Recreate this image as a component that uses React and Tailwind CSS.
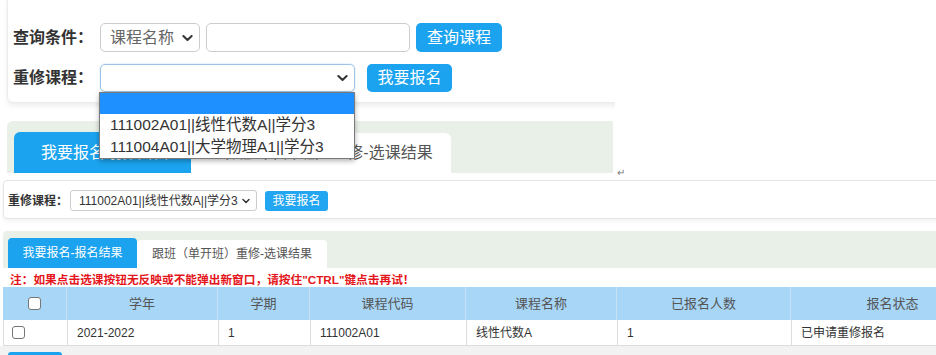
import React from 'react';

function Chevron({ className }) {
  return (
    <svg viewBox="0 0 12 8" className={className} fill="none" stroke="currentColor" strokeWidth="2.2" strokeLinecap="round" strokeLinejoin="round">
      <path d="M1.5 1.8 6 6.2l4.5-4.4" />
    </svg>
  );
}

function Check({ className }) {
  return <span className={`block bg-white border border-[#767676] rounded-[3px] ${className}`} />;
}

const cols = [
  { title: '学年', value: '2021-2022' },
  { title: '学期', value: '1' },
  { title: '课程代码', value: '111002A01' },
  { title: '课程名称', value: '线性代数A' },
  { title: '已报名人数', value: '1' },
  { title: '报名状态', value: '已申请重修报名' }
];

export default function App() {
  return (
    <div className="w-[936px] h-[355px] overflow-hidden bg-white text-[#333] font-[family-name:Liberation_Sans,Noto_Sans_CJK_SC,sans-serif]">
      {/* enlarged snapshot with the open dropdown */}
      <div className="flex h-[178px]">
        <div className="relative w-[615px] h-[173px] overflow-hidden">
          <div className="ml-[7px] -mt-[6px] w-[700px] border border-[#ececec] rounded-[6px] bg-white shadow-[0_3px_5px_rgba(0,0,0,0.07)] pl-[5px] pt-[28px] pb-[10px]">
            <div className="flex items-center h-[29px]">
              <span className="w-[87px] text-[16px] font-bold leading-none">查询条件：</span>
              <div className="w-[100px] h-[29px] border border-[#ccc] rounded-[5px] flex items-center justify-between pl-[9px] pr-[6px] text-[16px] text-[#666]">
                <span>课程名称</span>
                <Chevron className="w-[11px] h-[8px] text-[#333]" />
              </div>
              <div className="ml-[6px] w-[204px] h-[29px] border border-[#ccc] rounded-[5px]" />
              <div className="ml-[6px] w-[86px] h-[29px] rounded-[5px] bg-[#1ba3ef] text-white text-[16px] flex items-center justify-center">查询课程</div>
            </div>
            <div className="flex items-center h-[28px] mt-[12px]">
              <span className="w-[87px] text-[16px] font-bold leading-none">重修课程：</span>
              <div className="w-[255px] h-[28px] border border-[#9ec3e6] rounded-[5px] flex items-center justify-end pr-[6px] shadow-[0_0_2px_rgba(100,160,220,0.4)]">
                <Chevron className="w-[11px] h-[8px] text-[#333]" />
              </div>
              <div className="ml-[12px] w-[85px] h-[28px] rounded-[5px] bg-[#1ba3ef] text-white text-[16px] flex items-center justify-center">我要报名</div>
            </div>
          </div>
          <div className="ml-[7px] mt-[18px] w-[606px] h-[52px] bg-[#e8f0e7] rounded-tl-[6px] flex items-end pl-[7px]">
            <div className="w-[177px] h-[41px] rounded-t-[6px] bg-[#1ba3ef] text-white text-[16px] flex items-center pl-[27px]">我要报名-报名结果</div>
            <div className="w-[260px] h-[40px] rounded-t-[6px] bg-white text-[#555] text-[16px] flex items-center justify-center pl-[10px]">跟班（单开班）重修-选课结果</div>
          </div>
          <div className="absolute z-10 left-[99px] top-[92px] w-[256px] border border-[#7a7a7a] bg-white shadow-[0_2px_5px_rgba(0,0,0,0.3)] text-[15.5px] text-[#333]">
            <div className="h-[21px] bg-[#1e90ff]" />
            <div className="h-[22px] flex items-center pl-[10px]">111002A01||线性代数A||学分3</div>
            <div className="h-[22px] flex items-center pl-[10px]">111004A01||大学物理A1||学分3</div>
          </div>
        </div>
        <span className="self-end ml-[2px] text-[10px] leading-none text-[#777]">↵</span>
      </div>

      {/* actual page */}
      <div className="ml-[3px] mt-[2px] w-[960px] border border-[#e6e6e6] rounded-[4px] bg-white shadow-[0_2px_4px_rgba(0,0,0,0.06)] pl-[4px] pt-[9px] pb-[7px]">
        <div className="flex items-center h-[21px]">
          <span className="w-[62px] text-[12px] font-bold">重修课程：</span>
          <div className="w-[187px] h-[21px] border border-[#ccc] rounded-[3px] flex items-center justify-between pl-[8px] pr-[6px] text-[12px]">
            <span>111002A01||线性代数A||学分3</span>
            <Chevron className="w-[8px] h-[6px] text-[#333]" />
          </div>
          <div className="ml-[8px] w-[63px] h-[20px] rounded-[3px] bg-[#22a6f1] text-white text-[12px] flex items-center justify-center">我要报名</div>
        </div>
      </div>

      <div className="ml-[3px] mt-[12px] h-[37px] bg-[#e8f0e7] rounded-tl-[4px] flex items-end pl-[5px]">
        <div className="w-[129px] h-[30px] rounded-t-[4px] bg-[#1ba3ef] text-white text-[12px] flex items-center justify-center">我要报名-报名结果</div>
        <div className="w-[190px] h-[28px] rounded-t-[4px] bg-white text-[#555] text-[12px] flex items-center justify-center">跟班（单开班）重修-选课结果</div>
      </div>

      <div className="ml-[10px] mt-[5px] h-[14px] leading-[14px] text-[11.7px] font-bold text-[#e4161b]">
        注：如果点击选课按钮无反映或不能弹出新窗口，请按住"CTRL"键点击再试！
      </div>

      <div className="ml-[3px] w-[992px]">
        <div className="grid grid-cols-[64px_151px_92px_156px_151px_174px_204px] h-[33px] bg-[#a7d6f7] text-[13px] text-[#555]">
          <div className="flex items-center justify-center border-r border-[#c7e2f5]">
            <Check className="w-[13px] h-[13px]" />
          </div>
          {cols.map((c) => (
            <div key={c.title} className="flex items-center justify-center border-r border-[#c7e2f5]">{c.title}</div>
          ))}
        </div>
        <div className="grid grid-cols-[64px_151px_92px_156px_151px_174px_204px] h-[26px] bg-white text-[12px] border-l border-b border-[#ddd]">
          <div className="flex items-center pl-[8px] border-r border-[#ddd]">
            <Check className="w-[13px] h-[13px]" />
          </div>
          {cols.map((c) => (
            <div key={c.title} className="flex items-center pl-[9px] border-r border-[#ddd]">{c.value}</div>
          ))}
        </div>
      </div>
      <div className="h-[10px] bg-[#f2f2f2] pl-[8px] pt-[6px]">
        <div className="w-[54px] h-[6px] rounded-t-[3px] bg-[#1ba3ef]" />
      </div>
    </div>
  );
}
